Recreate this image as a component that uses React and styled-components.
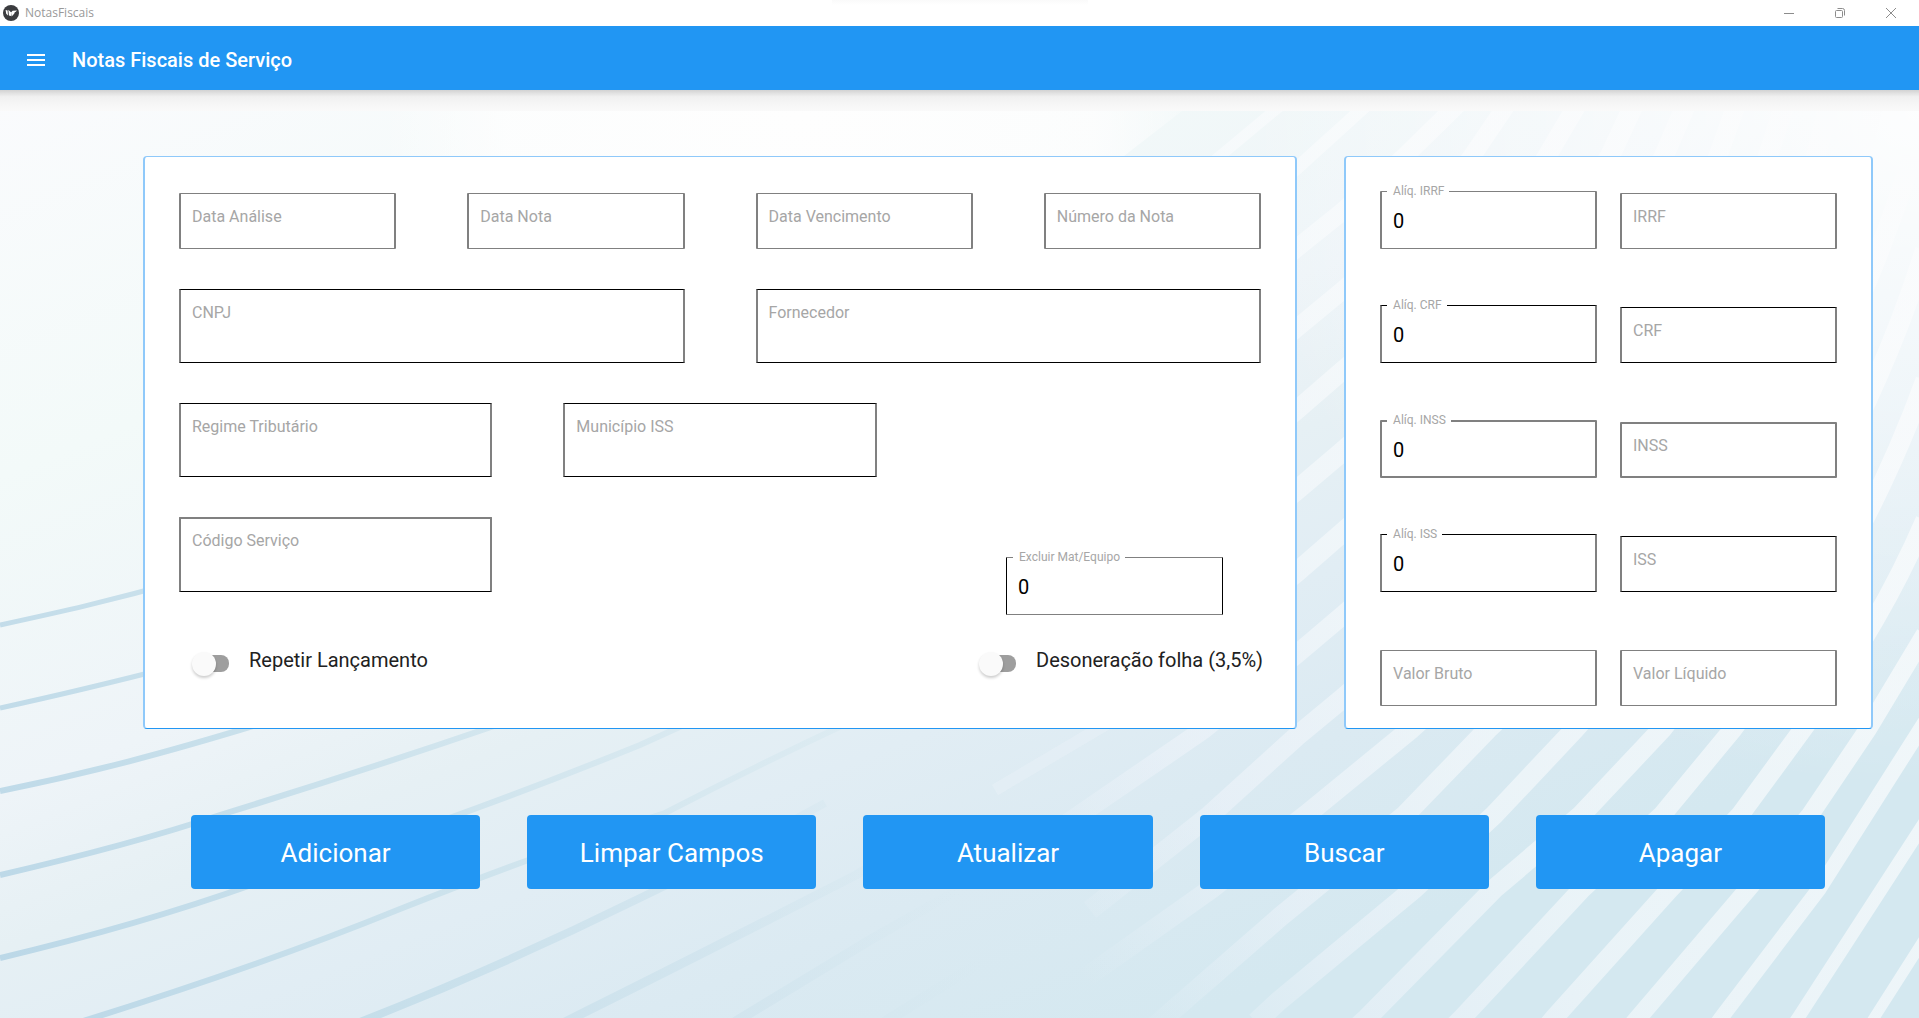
import React, { useState } from "react";
import styled, { createGlobalStyle, css } from "styled-components";

const BLUE = "#2196f3";

const GlobalStyle = createGlobalStyle`
  *, *::before, *::after { box-sizing: border-box; }
  body {
    margin: 0;
    background: #fafafa;
    font-family: Roboto, "Liberation Sans", sans-serif;
  }
  button, input { font-family: inherit; margin: 0; }
`;

const Window = styled.div`
  display: flex;
  flex-direction: column;
  min-height: 100vh;
`;

const TitleBar = styled.div`
  display: flex;
  align-items: center;
  height: 26px;
  padding: 0 3px;
  background: linear-gradient(#fafafa, #ffffff) center top / 256px 5px no-repeat #ffffff;
`;

const WindowTitle = styled.span`
  flex: 1;
  margin-left: 6px;
  font: 12px/26px "Open Sans", "Noto Sans", sans-serif;
  color: #999999;
`;

const WindowButton = styled.button`
  display: grid;
  place-items: center;
  width: 51px;
  height: 24px;
  padding: 0;
  border: 0;
  background: none;
  color: #8c8c8c;
`;

const AppBar = styled.header`
  display: flex;
  align-items: center;
  gap: 24px;
  height: 64px;
  padding: 4px 24px 0;
  background: ${BLUE};
  color: #ffffff;
`;

const MenuButton = styled.button`
  display: grid;
  place-items: center;
  width: 24px;
  height: 24px;
  padding: 0;
  border: 0;
  background: none;
  color: inherit;
`;

const Heading = styled.h1`
  margin: 0;
  font-size: 20px;
  line-height: 24px;
  font-weight: 500;
`;

const BarShadow = styled.div`
  height: 21px;
  background: linear-gradient(#d2d2d2 0%, #e2e2e2 16%, #f0f0f0 32%, #f5f5f5 60%, #fafafa 100%);
`;

const Main = styled.main`
  position: relative;
  z-index: 0;
  flex: 1;
  padding: 45px 46px 48px 143px;
`;

const Backdrop = styled.svg`
  position: absolute;
  inset: 0;
  z-index: -1;
  width: 100%;
  height: 100%;
`;

const Panels = styled.div`
  display: grid;
  grid-template-columns: 24fr 11fr;
  gap: 47px;
`;

const Panel = styled.section`
  display: flex;
  flex-direction: column;
  background: #ffffff;
  border: solid #8fc9fa;
  border-width: 1px 2px;
  border-bottom-color: ${BLUE};
  border-radius: 4px;
`;

const InvoicePanel = styled(Panel)`
  gap: 40px;
  padding: 36px 34px 45px;
`;

const TaxPanel = styled(Panel)`
  justify-content: space-between;
  padding: 34px 34px 22px;
`;

const Row = styled.div`
  display: grid;
  grid-template-columns: repeat(${(p) => p.$columns}, 1fr);
  column-gap: 71px;
  align-items: start;
`;

const PairRow = styled.div`
  display: grid;
  grid-template-columns: 1fr 1fr;
  column-gap: 23px;
  align-items: end;
  min-height: 58px;
`;

const MaterialSlot = styled.div`
  grid-column: 3;
  justify-self: end;
  width: 217px;
  margin: 40px 38px 0 0;
`;

const FieldBox = styled.div`
  position: relative;
  min-width: 0;
`;

const edges = {
  soft: css`border-color: #808080; border-width: 1px 2px;`,
  crisp: css`border-color: #000000 #808080; border-width: 1px 2px;`,
  wide: css`border-color: #808080; border-width: 2px;`,
  topWide: css`border-color: #808080 #808080 #000000; border-width: 2px 2px 1px;`,
  narrow: css`border-color: #808080 #000000; border-width: 1px;`,
};

const Input = styled.input`
  display: block;
  width: 100%;
  height: ${(p) => p.$height}px;
  padding: 2px 11px 0;
  border-style: solid;
  border-radius: 1px;
  ${(p) => edges[p.$edge]}
  background: #ffffff;
  color: #000000;
  font-size: 20px;
  outline: none;
`;

const FieldLabel = styled.label`
  position: absolute;
  color: #a6a6a6;
  white-space: nowrap;
  pointer-events: none;
  ${(p) =>
    p.$floating
      ? css`
          top: -8px;
          left: 7px;
          padding: 0 5px 0 6px;
          background: #ffffff;
          font-size: 12px;
          line-height: 16px;
        `
      : css`
          top: 14px;
          left: 13px;
          font-size: 16px;
          line-height: 20px;
        `}
`;

const SwitchRow = styled.div`
  display: flex;
  justify-content: space-between;
  margin: -10px -2px 0 0;
  padding-left: 13px;
`;

const SwitchGroup = styled.div`
  display: flex;
  gap: 20px;
`;

const SwitchLabel = styled.label`
  font-size: 20px;
  line-height: 30px;
  color: #212121;
`;

const Switch = styled.input`
  appearance: none;
  position: relative;
  width: 37px;
  height: 38px;

  &::before {
    content: "";
    position: absolute;
    top: 10px;
    right: 0;
    width: 32px;
    height: 17px;
    border-radius: 8px;
    background: #9e9e9e;
  }

  &::after {
    content: "";
    position: absolute;
    top: 7px;
    left: 0;
    width: 24px;
    height: 24px;
    border-radius: 50%;
    background: #fafafa;
    box-shadow: 0 2px 3px rgba(0, 0, 0, 0.2);
  }

  &:checked::before { background: #90caf9; }
  &:checked::after { left: 13px; background: ${BLUE}; }
`;

const Actions = styled.div`
  display: grid;
  grid-template-columns: repeat(5, 1fr);
  gap: 47px;
  margin-top: 86px;
  padding: 0 48px;
`;

const ActionButton = styled.button`
  height: 74px;
  padding: 2px 0 0;
  border: 0;
  border-radius: 4px;
  background: ${BLUE};
  color: #ffffff;
  font-size: 26px;
  line-height: 32px;
`;

function Field({ id, label, value, height = 56, edge = "soft" }) {
  const [text, setText] = useState(value || "");
  return (
    <FieldBox>
      <Input
        id={id}
        type="text"
        value={text}
        onChange={(e) => setText(e.target.value)}
        $height={height}
        $edge={edge}
      />
      <FieldLabel htmlFor={id} $floating={text !== ""}>
        {label}
      </FieldLabel>
    </FieldBox>
  );
}

function ToggleField({ id, label }) {
  return (
    <SwitchGroup>
      <Switch id={id} type="checkbox" />
      <SwitchLabel htmlFor={id}>{label}</SwitchLabel>
    </SwitchGroup>
  );
}

const DARK_LINES = [
  ["M0 625 C60 612 110 601 180 581", 5],
  ["M0 708 C60 695 110 683 180 665", 5],
  ["M0 791 C90 773 165 753 260 724", 6],
  ["M0 875 Q130 845 220 815 Q360 772 500 724", 6],
  ["M0 958 Q140 925 260 882 Q440 826 640 745 L695 720", 6],
  ["M80 1022 Q260 966 400 909 Q560 846 665 813 Q760 764 850 722", 6],
  ["M360 1022 Q500 967 640 898 Q740 850 825 803", 8],
  ["M565 1022 Q680 965 856 875 L1000 790", 9],
  ["M735 1022 L870 940 Q930 906 975 880", 10],
  ["M885 1022 L1000 950", 11],
];

const LIGHT_BANDS = [
  ["M1160 205 L1220 156 L1274 111 L1290 98", 11],
  ["M1200 250 L1297 168 L1360 111 L1375 97", 13],
  ["M1200 328 L1297 248 L1343 211 L1405 156 L1451 111 L1463 99", 18],
  ["M1200 408 L1297 328 L1343 290 Q1430 215 1472 156 L1510 100", 18],
  ["M1200 490 L1297 410 L1343 370 Q1490 250 1547 156 L1580 100", 19],
  ["M1200 570 L1297 490 L1343 451 Q1530 290 1610 156 L1636 100", 20],
  ["M1200 650 L1297 572 L1343 532 Q1590 320 1664 156 L1688 100", 20],
  ["M1060 828 L1203 730 L1297 654 L1343 615 Q1640 350 1718 156 L1738 100", 19],
  ["M1090 910 L1210 815 L1297 736 L1343 698 Q1690 400 1768 156 L1786 100", 20],
  ["M1040 1010 L1211 889 L1306 815 L1411 729 Q1740 440 1816 156 L1830 100", 20],
  ["M1148 1032 L1280 917 L1405 815 L1488 729 Q1800 440 1862 156 L1874 100", 20],
  ["M1256 1022 L1280 1000 L1414 889 L1494 815 L1575 729 Q1820 460 1912 156", 20],
  ["M1354 1030 L1367 1018 L1494 889 L1581 815 L1662 729 Q1850 490 1925 250", 20],
  ["M1450 1030 L1462 1018 L1582 889 L1662 815 L1733 729 Q1860 560 1925 380", 19],
  ["M1544 1030 L1554 1018 L1670 889 L1740 815 L1803 729 Q1880 625 1925 520", 19],
  ["M1628 1030 L1638 1018 L1748 889 L1810 815 L1868 729 L1925 634", 18],
  ["M1711 1032 L1721 1018 L1819 889 L1925 722", 15],
  ["M1790 1030 L1798 1018 L1925 822", 13],
  ["M1867 1030 L1874 1018 L1925 938", 11],
];

function WaveBackdrop() {
  return (
    <Backdrop viewBox="0 111 1919 907" preserveAspectRatio="none" aria-hidden="true">
      <defs>
        <linearGradient id="sky" gradientUnits="userSpaceOnUse" x1="0" y1="100" x2="480" y2="1300">
          <stop offset="0" stopColor="#fafbfd" />
          <stop offset="0.27" stopColor="#f3faf9" />
          <stop offset="0.5" stopColor="#eef4f8" />
          <stop offset="0.61" stopColor="#e6f0f4" />
          <stop offset="0.72" stopColor="#e1edf4" />
          <stop offset="0.84" stopColor="#dbeaf2" />
          <stop offset="1" stopColor="#d4e8f0" />
        </linearGradient>
        <radialGradient id="glow" gradientUnits="userSpaceOnUse" cx="1919" cy="111" r="680">
          <stop offset="0" stopColor="#ffffff" stopOpacity="0.9" />
          <stop offset="1" stopColor="#ffffff" stopOpacity="0" />
        </radialGradient>
        <radialGradient id="haze" gradientUnits="userSpaceOnUse" cx="800" cy="111" r="420">
          <stop offset="0" stopColor="#fefefe" />
          <stop offset="0.7" stopColor="#fefefe" stopOpacity="0.8" />
          <stop offset="1" stopColor="#fefefe" stopOpacity="0" />
        </radialGradient>
        <linearGradient id="dark" gradientUnits="userSpaceOnUse" x1="0" y1="1018" x2="720" y2="540">
          <stop offset="0" stopColor="#bad7e7" />
          <stop offset="0.5" stopColor="#cce2ec" />
          <stop offset="1" stopColor="#d8e9f0" stopOpacity="0.6" />
        </linearGradient>
        <linearGradient id="darkFade" gradientUnits="userSpaceOnUse" x1="360" y1="1018" x2="950" y2="850">
          <stop offset="0" stopColor="#c5deea" />
          <stop offset="0.6" stopColor="#cfe3ed" stopOpacity="0.7" />
          <stop offset="1" stopColor="#d2e6ee" stopOpacity="0" />
        </linearGradient>
        <linearGradient id="light" gradientUnits="userSpaceOnUse" x1="1000" y1="1018" x2="1700" y2="500">
          <stop offset="0.1" stopColor="#f4f6fc" stopOpacity="0" />
          <stop offset="0.35" stopColor="#f4f6fc" stopOpacity="0.45" />
          <stop offset="0.6" stopColor="#f7fafc" stopOpacity="0.62" />
          <stop offset="1" stopColor="#fbfcfd" stopOpacity="0.7" />
        </linearGradient>
      </defs>
      <rect x="0" y="111" width="1919" height="907" fill="url(#sky)" />
      <path d="M380 111 H1182 L1124 156 L1000 260 V540 H380 Z" fill="url(#haze)" />
      <rect x="1200" y="111" width="719" height="700" fill="url(#glow)" />
      <g fill="none">
        {DARK_LINES.map(([d, width], i) => (
          <path key={d} d={d} strokeWidth={width} stroke={i < 6 ? "url(#dark)" : "url(#darkFade)"} />
        ))}
        {LIGHT_BANDS.map(([d, width]) => (
          <path key={d} d={d} strokeWidth={width} stroke="url(#light)" />
        ))}
        <path d="M995 790 L1110 722" strokeWidth="12" stroke="#eef3f8" strokeOpacity="0.35" />
      </g>
    </Backdrop>
  );
}

const TAXES = [
  { name: "IRRF", edge: "soft" },
  { name: "CRF", edge: "crisp" },
  { name: "INSS", edge: "wide" },
  { name: "ISS", edge: "crisp" },
];

const ACTIONS = ["Adicionar", "Limpar Campos", "Atualizar", "Buscar", "Apagar"];

export default function App() {
  return (
    <Window>
      <GlobalStyle />
      <TitleBar>
        <svg width="16" height="16" viewBox="0 0 16 16" aria-hidden="true">
          <circle cx="8" cy="8" r="8" fill="#3b3c3f" />
          <path d="M2.6 5 L4.6 5.4 L5 10.6 L3.2 8.8 Z M5.4 4.8 L8 7.2 L8 11 L5.9 10.4 Z" fill="#ffffff" />
          <path d="M8 7.4 L9.6 5.8 L14 5.4 L12.8 6.8 L11.8 7.2 L11.2 8.8 L8.6 11.4 Z" fill="#ffffff" />
        </svg>
        <WindowTitle>NotasFiscais</WindowTitle>
        <WindowButton aria-label="Minimizar">
          <svg width="10" height="10" viewBox="0 0 10 10" stroke="currentColor">
            <path d="M0 5.5 H10" />
          </svg>
        </WindowButton>
        <WindowButton aria-label="Restaurar">
          <svg width="10" height="10" viewBox="0 0 10 10" fill="none" stroke="currentColor">
            <rect x="0.5" y="2.5" width="7" height="7" rx="1" />
            <path d="M2.5 0.5 H7.5 Q9.5 0.5 9.5 2.5 V7.5" />
          </svg>
        </WindowButton>
        <WindowButton aria-label="Fechar">
          <svg width="10" height="10" viewBox="0 0 10 10" stroke="currentColor">
            <path d="M0 0 L10 10 M10 0 L0 10" />
          </svg>
        </WindowButton>
      </TitleBar>
      <AppBar>
        <MenuButton aria-label="Menu">
          <svg width="24" height="24" viewBox="0 0 24 24" fill="currentColor">
            <path d="M3 6h18v2H3zM3 11h18v2H3zM3 16h18v2H3z" />
          </svg>
        </MenuButton>
        <Heading>Notas Fiscais de Serviço</Heading>
      </AppBar>
      <BarShadow />
      <Main>
        <WaveBackdrop />
        <Panels>
          <InvoicePanel>
            <Row $columns={4}>
              <Field id="data-analise" label="Data Análise" />
              <Field id="data-nota" label="Data Nota" />
              <Field id="data-vencimento" label="Data Vencimento" />
              <Field id="numero-nota" label="Número da Nota" />
            </Row>
            <Row $columns={2}>
              <Field id="cnpj" label="CNPJ" height={74} edge="crisp" />
              <Field id="fornecedor" label="Fornecedor" height={74} edge="crisp" />
            </Row>
            <Row $columns={3}>
              <Field id="regime" label="Regime Tributário" height={74} edge="crisp" />
              <Field id="municipio" label="Município ISS" height={74} edge="crisp" />
            </Row>
            <Row $columns={3}>
              <Field id="codigo" label="Código Serviço" height={75} edge="topWide" />
              <MaterialSlot>
                <Field id="excluir" label="Excluir Mat/Equipo" value="0" height={58} edge="narrow" />
              </MaterialSlot>
            </Row>
            <SwitchRow>
              <ToggleField id="repetir" label="Repetir Lançamento" />
              <ToggleField id="desoneracao" label="Desoneração folha (3,5%)" />
            </SwitchRow>
          </InvoicePanel>
          <TaxPanel>
            {TAXES.map(({ name, edge }) => (
              <PairRow key={name}>
                <Field id={`aliq-${name}`} label={`Alíq. ${name}`} value="0" height={58} edge={edge} />
                <Field id={`valor-${name}`} label={name} edge={edge} />
              </PairRow>
            ))}
            <PairRow>
              <Field id="valor-bruto" label="Valor Bruto" />
              <Field id="valor-liquido" label="Valor Líquido" />
            </PairRow>
          </TaxPanel>
        </Panels>
        <Actions>
          {ACTIONS.map((name) => (
            <ActionButton key={name} type="button">
              {name}
            </ActionButton>
          ))}
        </Actions>
      </Main>
    </Window>
  );
}
